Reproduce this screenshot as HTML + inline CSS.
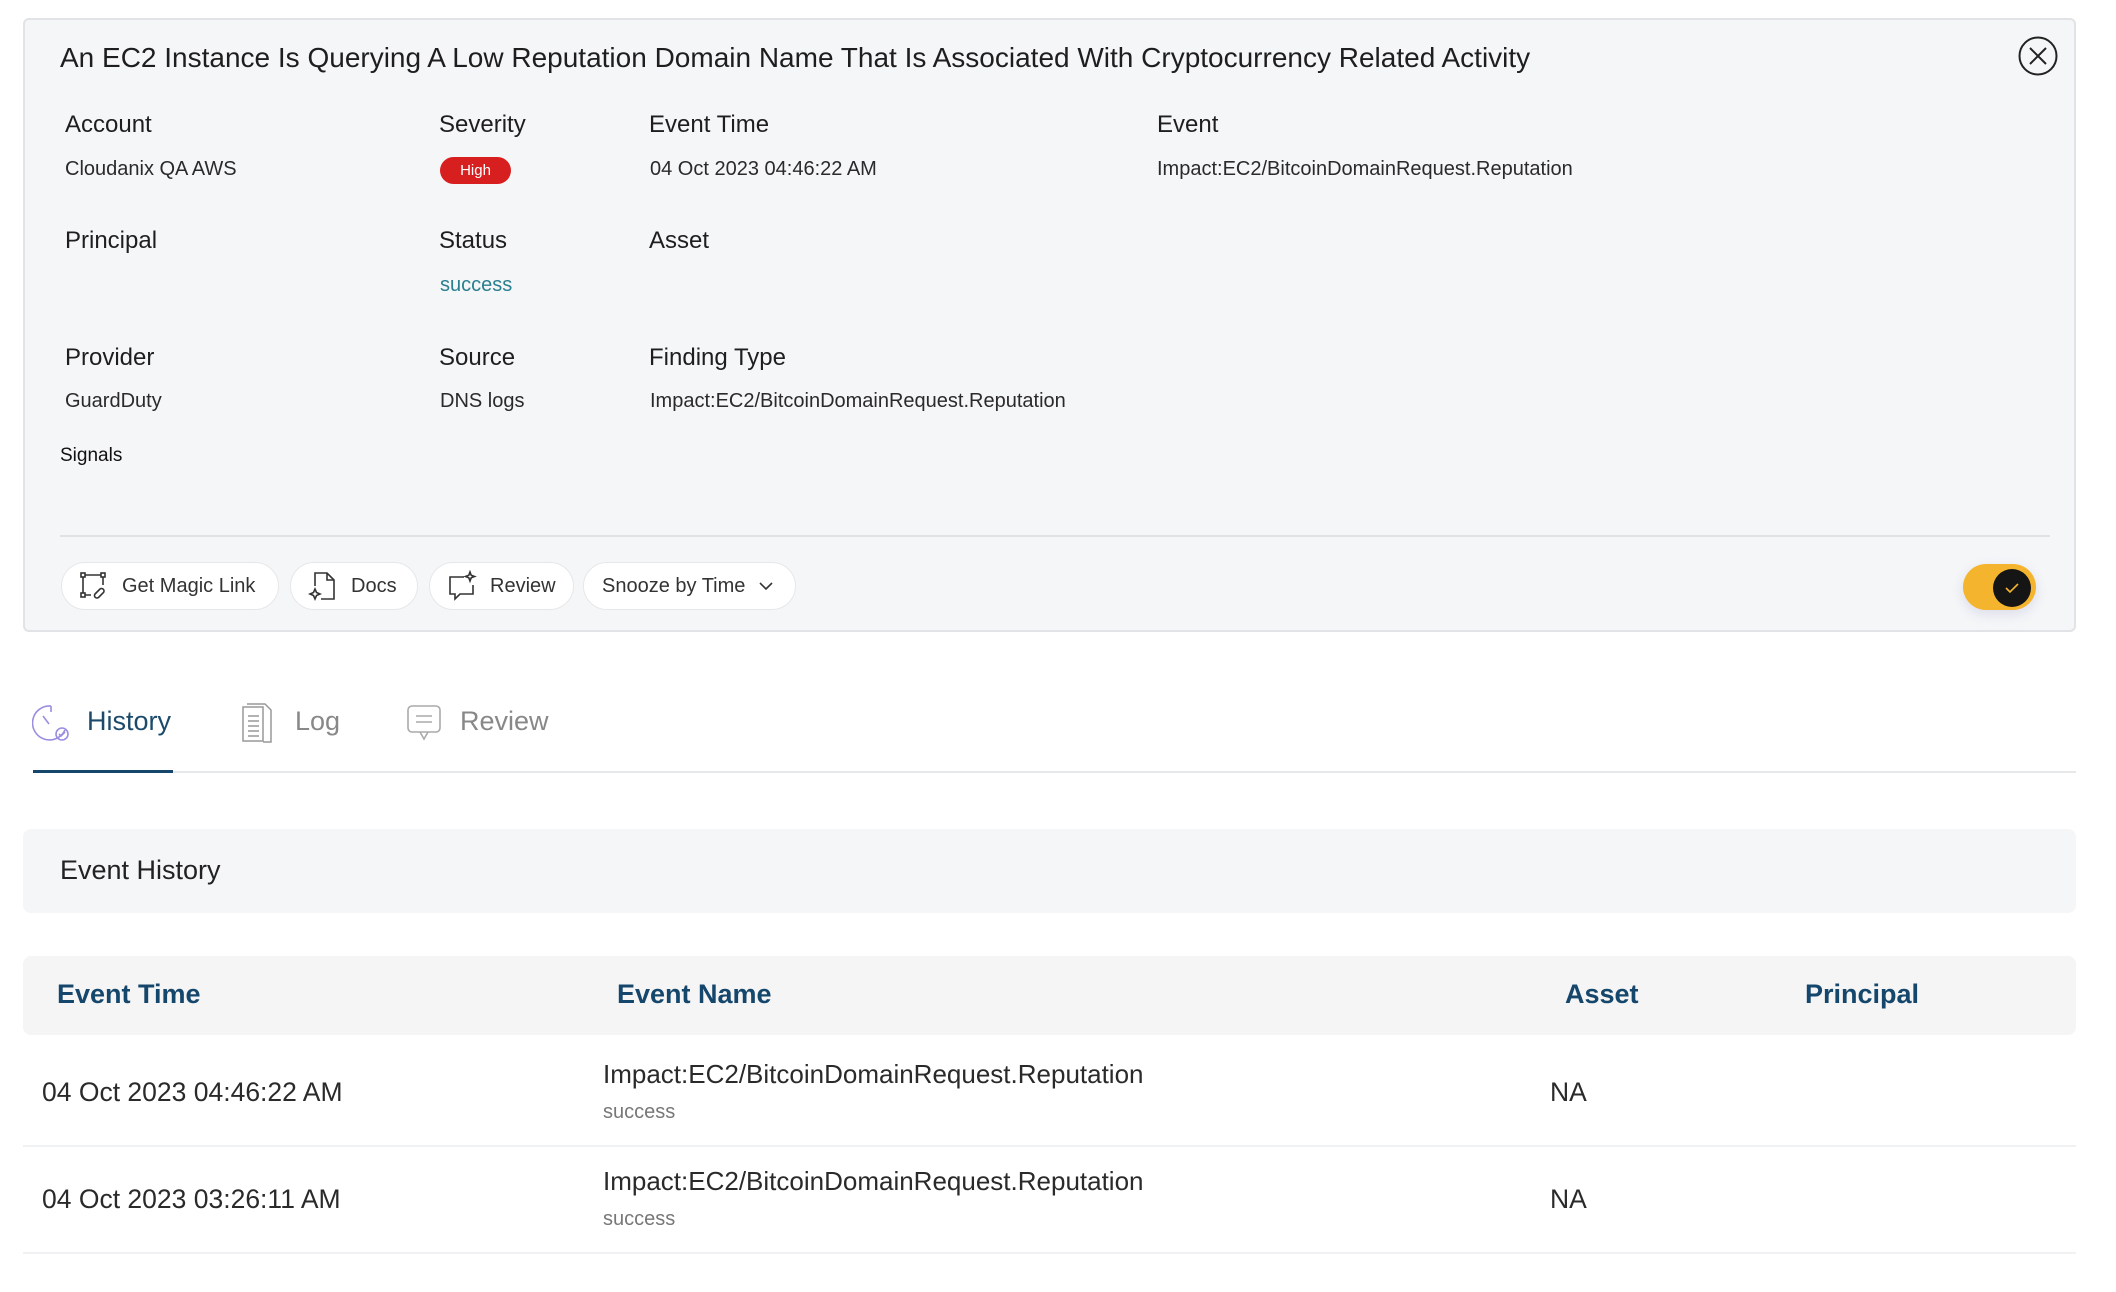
<!DOCTYPE html>
<html><head><meta charset="utf-8"><style>
*{margin:0;padding:0;box-sizing:border-box}
body{width:2116px;height:1292px;background:#fff;font-family:"Liberation Sans",sans-serif;color:#222;position:relative;overflow:hidden}
.a{position:absolute;white-space:nowrap}
.card{position:absolute;left:23px;top:18px;width:2053px;height:614px;background:#f5f6f8;border:2px solid #e2e3e6;border-radius:6px}
.lbl{font-size:24px;color:#1e1e1e}
.val{font-size:20px;color:#2a2a2a}
.btn{position:absolute;top:562px;height:48px;background:#fff;border:1px solid #e6e7ea;border-radius:24px;font-size:20px;color:#333;display:flex;align-items:center;gap:12px;padding-left:16px}
.th{font-size:27px;font-weight:bold;color:#15466b}
.td{font-size:26.5px;color:#2a2a2a}
.nm{font-size:26px;color:#2a2a2a}
.sub{font-size:20px;color:#777}
</style></head><body>
<div class="card"></div>
<div class="a" style="left:60px;top:42px;font-size:28px;color:#1e1e1e">An EC2 Instance Is Querying A Low Reputation Domain Name That Is Associated With Cryptocurrency Related Activity</div>
<svg class="a" style="left:2018px;top:36px" width="40" height="40" viewBox="0 0 40 40"><circle cx="20" cy="20" r="18.5" fill="none" stroke="#222" stroke-width="2"/><path d="M12 12L28 28M28 12L12 28" stroke="#222" stroke-width="2"/></svg>

<div class="a lbl" style="left:65px;top:111px">Account</div>
<div class="a lbl" style="left:439px;top:111px">Severity</div>
<div class="a lbl" style="left:649px;top:111px">Event Time</div>
<div class="a lbl" style="left:1157px;top:111px">Event</div>
<div class="a val" style="left:65px;top:158px">Cloudanix QA AWS</div>
<div class="a" style="left:440px;top:157px;width:71px;height:27px;background:#d71f1f;border-radius:14px;color:#fff;font-size:15px;text-align:center;line-height:27px">High</div>
<div class="a val" style="left:650px;top:158px">04 Oct 2023 04:46:22 AM</div>
<div class="a val" style="left:1157px;top:158px">Impact:EC2/BitcoinDomainRequest.Reputation</div>

<div class="a lbl" style="left:65px;top:227px">Principal</div>
<div class="a lbl" style="left:439px;top:227px">Status</div>
<div class="a lbl" style="left:649px;top:227px">Asset</div>
<div class="a val" style="left:440px;top:274px;color:#2a7f8f">success</div>

<div class="a lbl" style="left:65px;top:344px">Provider</div>
<div class="a lbl" style="left:439px;top:344px">Source</div>
<div class="a lbl" style="left:649px;top:344px">Finding Type</div>
<div class="a val" style="left:65px;top:390px">GuardDuty</div>
<div class="a val" style="left:440px;top:390px">DNS logs</div>
<div class="a val" style="left:650px;top:390px">Impact:EC2/BitcoinDomainRequest.Reputation</div>
<div class="a val" style="left:60px;top:445px;color:#111;font-size:19px">Signals</div>

<div class="a" style="left:60px;top:535px;width:1990px;height:2px;background:#e1e2e5"></div>

<div class="btn" style="left:61px;width:218px"><svg width="32" height="32" viewBox="0 0 32 32" fill="none" stroke="#333" stroke-width="1.6"><rect x="3" y="3" width="4" height="4"/><rect x="23" y="3" width="4" height="4"/><rect x="3" y="23" width="4" height="4"/><path d="M7 5h16M5 7v16M7 25h6M25 7v8"/><path d="M17 24l5-5a2.5 2.5 0 013.5 3.5l-5 5a2.5 2.5 0 01-3.5-3.5z"/></svg>Get Magic Link</div>
<div class="btn" style="left:290px;width:128px"><svg width="32" height="32" viewBox="0 0 32 32" fill="none" stroke="#333" stroke-width="1.6"><path d="M8 16V3h12l7 7v19H14"/><path d="M20 3v7h7"/><path d="M8 19l1.5 3.5L13 24l-3.5 1.5L8 29l-1.5-3.5L3 24l3.5-1.5z"/></svg>Docs</div>
<div class="btn" style="left:429px;width:145px"><svg width="32" height="32" viewBox="0 0 32 32" fill="none" stroke="#333" stroke-width="1.6"><path d="M18 7H4v17h5v5l5-5h13V15"/><path d="M24 2l1.2 3.3L28.5 6.5l-3.3 1.2L24 11l-1.2-3.3L19.5 6.5l3.3-1.2z"/></svg>Review</div>
<div class="btn" style="left:583px;width:213px;padding-left:18px">Snooze by Time <svg width="18" height="18" viewBox="0 0 18 18"><path d="M3 6l6 6 6-6" fill="none" stroke="#333" stroke-width="1.6"/></svg></div>

<div class="a" style="left:1963px;top:564px;width:73px;height:46px;border-radius:23px;background:#f5b42e;box-shadow:0 4px 12px rgba(120,120,180,.2)"></div>
<div class="a" style="left:1993px;top:569px;width:38px;height:38px;border-radius:50%;background:#151515"></div>
<svg class="a" style="left:2002px;top:578px" width="20" height="20" viewBox="0 0 20 20"><path d="M4 10l4 4 8-8" fill="none" stroke="#f5b42e" stroke-width="1.6"/></svg>

<svg class="a" style="left:32px;top:703px" width="40" height="40" viewBox="0 0 40 40" fill="none" stroke="#9b8ee0" stroke-width="1.6"><path d="M19 3v6"/><path d="M19 3A17 17 0 1 0 33 27"/><path d="M11 13l6 8"/><circle cx="30" cy="31" r="6"/><path d="M27 31l2 2 4-4"/></svg>
<div class="a" style="left:87px;top:706px;font-size:27px;color:#1b4a6b">History</div>
<svg class="a" style="left:240px;top:702px" width="34" height="42" viewBox="0 0 34 42" fill="none" stroke="#999" stroke-width="1.5"><path d="M3 5h20v34H3z"/><path d="M7 2h18l6 6v32H23"/><path d="M8 14h11M8 19h11M8 24h11M8 29h11M8 34h11"/></svg>
<div class="a" style="left:295px;top:706px;font-size:27px;color:#888">Log</div>
<svg class="a" style="left:405px;top:703px" width="38" height="42" viewBox="0 0 38 42" fill="none" stroke="#aaa" stroke-width="1.6"><rect x="3" y="3" width="32" height="26" rx="4"/><path d="M11 13h16M11 19h16"/><path d="M15 29l4 7 4-7"/></svg>
<div class="a" style="left:460px;top:706px;font-size:27px;color:#888">Review</div>
<div class="a" style="left:33px;top:771px;width:2043px;height:2px;background:#e6e8ea"></div>
<div class="a" style="left:33px;top:770px;width:140px;height:3px;background:#15466b"></div>

<div class="a" style="left:23px;top:829px;width:2053px;height:84px;background:#f5f6f8;border-radius:8px"></div>
<div class="a" style="left:60px;top:855px;font-size:27px;color:#222">Event History</div>

<div class="a" style="left:23px;top:956px;width:2053px;height:79px;background:#f5f5f5;border-radius:8px"></div>
<div class="a th" style="left:57px;top:979px">Event Time</div>
<div class="a th" style="left:617px;top:979px">Event Name</div>
<div class="a th" style="left:1565px;top:979px">Asset</div>
<div class="a th" style="left:1805px;top:979px">Principal</div>

<div class="a td" style="left:42px;top:1077px">04 Oct 2023 04:46:22 AM</div>
<div class="a nm" style="left:603px;top:1059px">Impact:EC2/BitcoinDomainRequest.Reputation</div>
<div class="a sub" style="left:603px;top:1101px">success</div>
<div class="a td" style="left:1550px;top:1077px">NA</div>
<div class="a" style="left:23px;top:1145px;width:2053px;height:2px;background:#f0f1f2"></div>

<div class="a td" style="left:42px;top:1184px">04 Oct 2023 03:26:11 AM</div>
<div class="a nm" style="left:603px;top:1166px">Impact:EC2/BitcoinDomainRequest.Reputation</div>
<div class="a sub" style="left:603px;top:1208px">success</div>
<div class="a td" style="left:1550px;top:1184px">NA</div>
<div class="a" style="left:23px;top:1252px;width:2053px;height:2px;background:#f0f1f2"></div>
</body></html>
